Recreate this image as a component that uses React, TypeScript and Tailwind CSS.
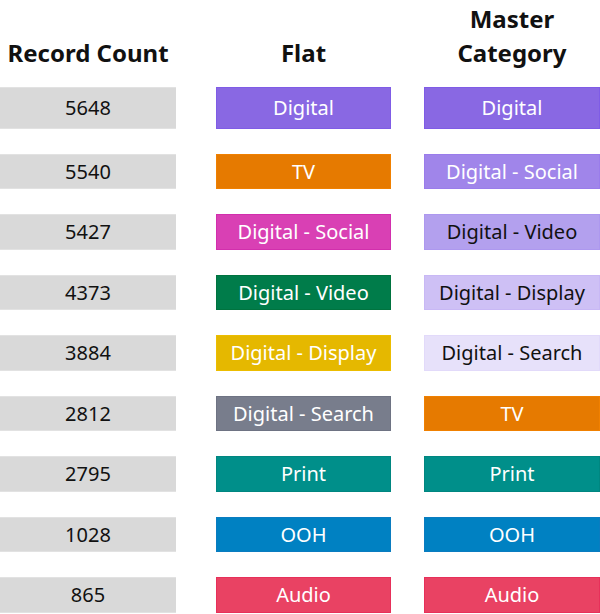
const rows = [
  { count: "5648", flat: "Digital", flatBg: "bg-[#8968e3] border-[#7f5ce6]", master: "Digital", masterBg: "bg-[#8968e3] border-[#7f5ce6]", masterText: "text-white" },
  { count: "5540", flat: "TV", flatBg: "bg-[#e67a00] border-[#f08000]", master: "Digital - Social", masterBg: "bg-[#a085ea] border-[#9a7ceb]", masterText: "text-white" },
  { count: "5427", flat: "Digital - Social", flatBg: "bg-[#d940b4] border-[#d22fad]", master: "Digital - Video", masterBg: "bg-[#b3a0ee] border-[#ad98ef]", masterText: "text-[#111]" },
  { count: "4373", flat: "Digital - Video", flatBg: "bg-[#007c4a] border-[#00733f]", master: "Digital - Display", masterBg: "bg-[#cec0f5] border-[#c8b8f5]", masterText: "text-[#111]" },
  { count: "3884", flat: "Digital - Display", flatBg: "bg-[#e5b800] border-[#ecbd00]", master: "Digital - Search", masterBg: "bg-[#e7e1fa] border-[#e2dafa]", masterText: "text-[#111]" },
  { count: "2812", flat: "Digital - Search", flatBg: "bg-[#787d8c] border-[#6e7383]", master: "TV", masterBg: "bg-[#e67a00] border-[#f08000]", masterText: "text-white" },
  { count: "2795", flat: "Print", flatBg: "bg-[#008f8a] border-[#008680]", master: "Print", masterBg: "bg-[#008f8a] border-[#008680]", masterText: "text-white" },
  { count: "1028", flat: "OOH", flatBg: "bg-[#0081c2] border-[#0a7cc0]", master: "OOH", masterBg: "bg-[#0081c2] border-[#0a7cc0]", masterText: "text-white" },
  { count: "865", flat: "Audio", flatBg: "bg-[#e94263] border-[#e7305a]", master: "Audio", masterBg: "bg-[#e94263] border-[#e7305a]", masterText: "text-white" },
];

const font = { fontFamily: '"Noto Sans", "Open Sans", sans-serif' };

export default function App() {
  return (
    <div className="w-[600px] h-[614px] bg-white overflow-hidden" style={font}>
      <div className="grid grid-cols-[216px_208px_176px] h-[87px] items-end pb-[17px] text-[24px] font-bold leading-[34px] text-[#111] text-center">
        <div className="w-[176px]">Record Count</div>
        <div className="w-[175px]">Flat</div>
        <div className="w-[176px]">
          Master
          <br />
          Category
        </div>
      </div>

      <div className="flex flex-col gap-[22.9px]">
        {rows.map((r, i) => (
          <div
            key={r.count}
            className={`grid grid-cols-[216px_208px_176px] text-[20px] ${i === 0 ? "h-[42px]" : "h-[37.6px] pt-[2px]"}`}
          >
            <div className="w-[176px] h-full bg-[#d9d9d9] border-y border-[#e2e2e2] flex items-center justify-center text-[#111]">
              {r.count}
            </div>
            <div className={`w-[175px] h-full border flex items-center justify-center text-white ${r.flatBg}`}>
              {r.flat}
            </div>
            <div className={`w-[176px] h-full border flex items-center justify-center ${r.masterBg} ${r.masterText}`}>
              {r.master}
            </div>
          </div>
        ))}
      </div>
    </div>
  );
}
